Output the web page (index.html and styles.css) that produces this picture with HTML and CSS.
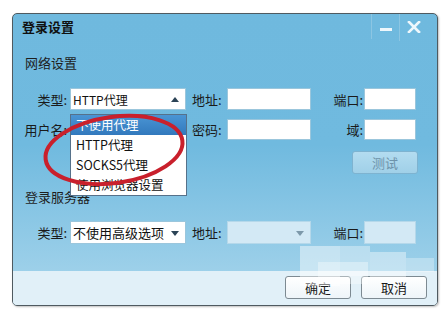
FILE: index.html
```html
<!DOCTYPE html>
<html lang="zh-CN">
<head>
    <meta charset="UTF-8">
    <meta name="viewport" content="width=device-width, initial-scale=1.0">
    <title>登录设置</title>
    <link rel="stylesheet" href="styles.css">
</head>
<body>

    <!-- Dialog -->
    <div class="dialog">
        <div class="titlebar">
            <span class="title">登录设置</span>
            <div class="win-buttons">
                <span class="win-btn min"><span class="min-bar"></span></span>
                <span class="win-btn close">
                    <svg width="14" height="12" viewBox="0 0 14 12"><path d="M2 1 L12 11 M12 1 L2 11" stroke="#eef7fc" stroke-width="2.6" stroke-linecap="square"/></svg>
                </span>
            </div>
        </div>

        <div class="content">
            <div class="section">网络设置</div>
            <div class="form-row">
                <label class="lbl-left">类型:</label>
                <div class="select">HTTP代理<span class="arrow up"></span></div>
                <label class="lbl-mid">地址:</label>
                <div class="input"></div>
                <label class="lbl-right">端口:</label>
                <div class="input"></div>
            </div>
            <div class="form-row row2">
                <label class="lbl-left">用户名:</label>
                <div></div>
                <label class="lbl-mid">密码:</label>
                <div class="input"></div>
                <label class="lbl-right">域:</label>
                <div class="input"></div>
            </div>
            <div class="test-row">
                <button class="btn-test">测试</button>
            </div>

            <div class="section section2">登录服务器</div>
            <div class="form-row row3">
                <label class="lbl-left">类型:</label>
                <div class="select">不使用高级选项<span class="arrow down"></span></div>
                <label class="lbl-mid">地址:</label>
                <div class="select disabled"><span class="arrow down grey"></span></div>
                <label class="lbl-right">端口:</label>
                <div class="input disabled"></div>
            </div>
        </div>

        <div class="footer">
            <button class="btn">确定</button>
            <button class="btn">取消</button>
        </div>

        <!-- open dropdown -->
        <ul class="dropdown">
            <li class="selected">不使用代理</li>
            <li>HTTP代理</li>
            <li>SOCKS5代理</li>
            <li>使用浏览器设置</li>
        </ul>
    </div>

    <!-- red annotation ring + watermark -->
    <svg class="overlay" width="442" height="310" viewBox="0 0 442 310">
        <g fill="#ffffff">
            <rect x="300" y="246" width="40" height="40" fill-opacity="0.45"/>
            <rect x="340" y="246" width="30" height="30" fill-opacity="0.35"/>
            <rect x="370" y="252" width="36" height="28" fill-opacity="0.4"/>
            <rect x="406" y="258" width="28" height="14" fill-opacity="0.3"/>
            <rect x="318" y="262" width="50" height="22" fill-opacity="0.35"/>
        </g>
        <ellipse cx="114" cy="150" rx="69" ry="33" transform="rotate(-8 114 150)" fill="none" stroke="#c9202c" stroke-width="4"/>
    </svg>

</body>
</html>
```

FILE: styles.css
```css
body {
    font-family: "Noto Sans CJK SC", "Liberation Sans", sans-serif;
    font-size: 12px;
    color: #1a1a1a;
    background-color: #fff;
    margin: 0;
    padding: 0;
    width: 442px;
    height: 310px;
    overflow: hidden;
    position: relative;
}

.dialog {
    position: relative;
    box-sizing: border-box;
    margin: 13px 0 0 12px;
    width: 426px;
    height: 293px;
    border: 1px solid #4f5a60;
    border-radius: 5px;
    overflow: hidden;
    display: flex;
    flex-direction: column;
    background: linear-gradient(to bottom, #6fb9de 0%, #70badf 45%, #a9d6ec 100%);
    box-shadow: 1px 1px 2px rgba(0, 0, 0, 0.25);
}

.titlebar {
    height: 25px;
    display: flex;
    align-items: center;
    justify-content: space-between;
    padding-left: 9px;
}

.title {
    font-weight: bold;
    font-size: 13px;
    color: #111;
}

.win-buttons {
    display: flex;
    align-self: flex-start;
    height: 25px;
    margin-right: 10px;
}

.win-btn {
    display: flex;
    align-items: center;
    justify-content: center;
    height: 25px;
    width: 27px;
    border-left: 1px solid #8cc6e3;
}

.min-bar {
    display: block;
    width: 12px;
    height: 3px;
    margin-top: 6px;
    background-color: #eef7fc;
}

.win-btn.close {
    padding-bottom: 2px;
}

.content {
    flex: 1;
}

.section {
    margin: 16px 0 0 12px;
    font-size: 13px;
    line-height: 16px;
    color: #1e1e1e;
}

.section2 {
    margin-top: 15px;
}

.form-row {
    display: grid;
    grid-template-columns: 57px 116px 41px 84px 53px 52px;
    height: 22px;
    margin-top: 17px;
    align-items: center;
}

.form-row.row2 {
    margin-top: 9px;
    height: 21px;
}

.form-row.row3 {
    margin-top: 16px;
    height: 23px;
}

.form-row > * {
    height: 100%;
}

label {
    display: flex;
    align-items: center;
    font-size: 13px;
}

.lbl-left {
    justify-content: flex-end;
    padding-right: 3px;
}

.lbl-mid {
    padding-left: 6px;
}

.lbl-right {
    justify-content: flex-end;
    padding-right: 1px;
}

.input,
.select {
    box-sizing: border-box;
    background-color: #fff;
    border: 1px solid #9bc6dc;
}

.select {
    position: relative;
    display: flex;
    align-items: center;
    padding-left: 2px;
    font-size: 12px;
    color: #111;
}

.row3 .select {
    font-size: 13px;
}

.input.disabled,
.select.disabled {
    background-color: #d3e9f5;
    border-color: #b5d8ea;
}

.arrow {
    position: absolute;
    right: 6px;
    width: 0;
    height: 0;
    border-left: 4px solid transparent;
    border-right: 4px solid transparent;
}

.arrow.up {
    border-bottom: 5px solid #2b4356;
    top: 8px;
}

.arrow.down {
    border-top: 5px solid #2b4356;
    top: 9px;
}

.arrow.grey {
    border-top-color: #7d99aa;
}

.test-row {
    display: flex;
    justify-content: flex-end;
    padding-right: 19px;
    margin-top: 11px;
}

.btn-test {
    width: 66px;
    height: 23px;
    font-family: inherit;
    font-size: 13px;
    color: #6e93aa;
    background: linear-gradient(to bottom, #b3dcf0, #a0d0e8);
    border: 1px solid #7eb3d0;
    border-radius: 3px;
    padding: 0;
}

.footer {
    height: 34px;
    box-sizing: border-box;
    display: flex;
    justify-content: flex-end;
    gap: 10px;
    padding: 5px 10px 0 0;
    background-color: #e1f0f8;
}

.btn {
    width: 66px;
    height: 23px;
    font-family: inherit;
    font-size: 13px;
    color: #1a1a1a;
    background: linear-gradient(to bottom, #ffffff, #eef5f9);
    border: 1px solid #7d8a92;
    border-radius: 3px;
    padding: 0;
}

.dropdown {
    position: absolute;
    left: 57px;
    top: 100px;
    width: 117px;
    box-sizing: border-box;
    margin: 0;
    padding: 0;
    list-style: none;
    background-color: #fff;
    border: 1px solid #56718a;
}

.dropdown li {
    height: 20px;
    line-height: 20px;
    padding-left: 5px;
    font-size: 12.5px;
    color: #111;
}

.dropdown li.selected {
    color: #fff;
    background: linear-gradient(to bottom, #4a95d4, #3279bd);
}

.overlay {
    position: absolute;
    left: 0;
    top: 0;
    pointer-events: none;
}
```
